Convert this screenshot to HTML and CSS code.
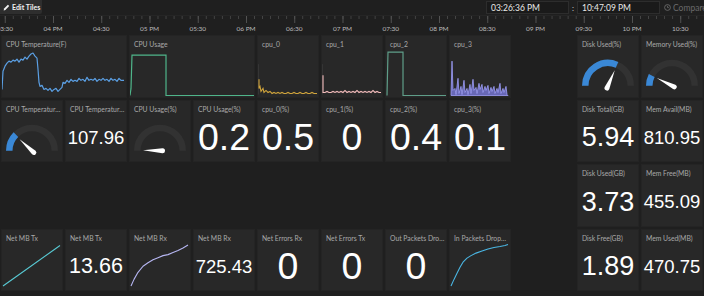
FILE: index.html
```html
<!DOCTYPE html>
<html>
<head>
<meta charset="utf-8">
<link rel="stylesheet" href="styles.css">
</head>
<body>
<div class="app">
  <header class="topbar">
    <button class="edit-btn">
      <svg class="pencil" width="7" height="7" viewBox="0 0 7 7"><path d="M0.6 6.4 L1.1 4.6 L4.9 0.8 L6.2 2.1 L2.4 5.9 Z" fill="#f2f2f2"/></svg>
      <span>Edit Tiles</span>
    </button>
    <div class="spacer"></div>
    <div class="time-input">03:26:36 PM</div>
    <span class="colon">:</span>
    <div class="time-input">10:47:09 PM</div>
    <div class="compare">
      <svg width="7" height="7" viewBox="0 0 7 7"><circle cx="3.5" cy="3.5" r="2.9" fill="none" stroke="#6a6a6a" stroke-width="0.9"/><path d="M3.5 1.8 V3.6 H4.9" fill="none" stroke="#6a6a6a" stroke-width="0.8"/></svg>
      <span>Compare</span>
    </div>
  </header>

  <div class="timeline">
    <svg width="704" height="20" viewBox="0 0 704 20">
      <defs>
        <pattern id="minor" x="4.75" y="0" width="8.0417" height="20" patternUnits="userSpaceOnUse">
          <rect x="0" y="1" width="0.8" height="3" fill="#4a4a4a"/>
        </pattern>
        <pattern id="major" x="4.75" y="0" width="48.25" height="20" patternUnits="userSpaceOnUse">
          <rect x="0" y="1" width="0.9" height="7" fill="#555"/>
        </pattern>
      </defs>
      <rect x="0" y="0.5" width="704" height="0.6" fill="#2c2c2c"/>
      <rect x="0" y="0" width="704" height="20" fill="url(#minor)"/>
      <rect x="0" y="0" width="704" height="20" fill="url(#major)"/>
      <g class="tl-labels" text-anchor="middle">
        <text x="4.75" y="15.5">03:30</text>
        <text x="53" y="15.5">04 PM</text>
        <text x="101.25" y="15.5">04:30</text>
        <text x="149.5" y="15.5">05 PM</text>
        <text x="197.75" y="15.5">05:30</text>
        <text x="246" y="15.5">06 PM</text>
        <text x="294.25" y="15.5">06:30</text>
        <text x="342.5" y="15.5">07 PM</text>
        <text x="390.75" y="15.5">07:30</text>
        <text x="439" y="15.5">08 PM</text>
        <text x="487.25" y="15.5">08:30</text>
        <text x="535.5" y="15.5">09 PM</text>
        <text x="583.75" y="15.5">09:30</text>
        <text x="632" y="15.5">10 PM</text>
        <text x="680.25" y="15.5">10:30</text>
      </g>
    </svg>
  </div>

  <main class="grid">
    <!-- Row 1 -->
    <section class="tile r1 span2">
      <div class="label">CPU Temperature(F)</div>
      <div class="body">
        <svg class="chart" viewBox="0 0 124 46" preserveAspectRatio="none">
          <polyline fill="none" stroke="#5b9fe3" stroke-width="1.2" stroke-linejoin="round" points="0,39 1,21 3,16 5,13 7,11 9,12 11,10 13,11 15,9 17,12 19,9 21,10 23,7 25,9 27,6 29,4 31,3 33,6 35,8 36,19 37,32 38,36 40,35 42,39 44,38 46,40 48,38 50,41 52,39 54,38 56,41 58,39 60,37 61,32 63,33 65,30 67,32 69,29 71,31 73,30 75,31 77,28 79,30 81,29 83,31 85,27 87,30 89,29 91,30 93,28 95,31 97,29 99,30 101,28 103,30 105,29 107,31 109,28 111,30 113,29 115,31 117,28 119,30 122,30"/>
        </svg>
      </div>
    </section>
    <section class="tile r1 span2">
      <div class="label">CPU Usage</div>
      <div class="body">
        <svg class="chart" viewBox="0 0 124 46" preserveAspectRatio="none">
          <polyline fill="none" stroke="#4fb58a" stroke-width="1.2" points="0,45 1,38 2,5 36,5 36,45 124,45"/>
        </svg>
      </div>
    </section>
    <section class="tile r1">
      <div class="label">cpu_0</div>
      <div class="body">
        <svg class="chart" viewBox="0 0 60 46" preserveAspectRatio="none">
          <line x1="0.5" y1="14" x2="0.5" y2="44" stroke="#3a3a3a" stroke-width="0.7"/>
          <polyline fill="none" stroke="#d1a53c" stroke-width="1.1" points="1,29 1,38 2,36 3,41 5,38 6,42 8,40 10,42 12,41 14,43 16,42 18,43 20,42 22,43 24,42 26,43 28,43 30,42 32,43 34,43 36,42 38,43 40,43 42,42 44,43 46,43 48,42 50,43 52,43 54,42 56,43 59,43"/>
        </svg>
      </div>
    </section>
    <section class="tile r1">
      <div class="label">cpu_1</div>
      <div class="body">
        <svg class="chart" viewBox="0 0 60 46" preserveAspectRatio="none">
          <line x1="0.5" y1="14" x2="0.5" y2="44" stroke="#3a3a3a" stroke-width="0.7"/>
          <polyline fill="none" stroke="#f3bcbc" stroke-width="1.1" points="1,25 1,42 3,42 5,41 7,42 9,42 11,41 13,42 15,41 17,42 19,41 21,42 23,40 25,42 27,41 29,42 31,41 33,42 35,40 37,42 39,41 41,42 43,41 45,42 47,41 49,42 51,40 53,42 55,41 57,42 59,42"/>
        </svg>
      </div>
    </section>
    <section class="tile r1">
      <div class="label">cpu_2</div>
      <div class="body">
        <svg class="chart" viewBox="0 0 60 46" preserveAspectRatio="none">
          <polyline fill="none" stroke="#5f9e89" stroke-width="1.2" points="1,45 2,2 17,2 17,45 60,45"/>
        </svg>
      </div>
    </section>
    <section class="tile r1">
      <div class="label">cpu_3</div>
      <div class="body">
        <svg class="chart" viewBox="0 0 60 46" preserveAspectRatio="none">
          <polygon fill="#7e7ee6" fill-opacity="0.75" stroke="#9d9df7" stroke-width="0.8" stroke-linejoin="round" points="1,45 2,11 3,40 5,38 6,44 8,28 9,43 11,36 12,44 14,30 15,42 17,38 18,44 20,34 21,43 23,29 24,40 26,37 27,43 29,33 30,39 32,34 33,42 35,36 36,40 38,35 39,43 41,37 42,41 44,36 45,43 47,38 48,42 50,33 51,43 53,38 54,42 56,36 57,44 58,45"/>
        </svg>
      </div>
    </section>
    <section class="tile r1 c10">
      <div class="label">Disk Used(%)</div>
      <div class="body">
        <svg class="chart" viewBox="0 0 60 46">
          <path d="M 7.25 35.5 A 22.75 22.75 0 0 1 52.75 35.5" fill="none" stroke="#323232" stroke-width="6.5"/>
          <path d="M 7.25 35.5 A 22.75 22.75 0 0 1 39.03 14.62" fill="none" stroke="#3a88d6" stroke-width="6.5"/>
          <path class="needle" d="M 13 35.5 L 32.5 33 A 2.5 2.5 0 0 1 32.5 38 Z" transform="rotate(113.4 30 35.5)"/>
        </svg>
      </div>
    </section>
    <section class="tile r1 c11">
      <div class="label">Memory Used(%)</div>
      <div class="body">
        <svg class="chart" viewBox="0 0 60 46">
          <path d="M 7.25 35.5 A 22.75 22.75 0 0 1 52.75 35.5" fill="none" stroke="#323232" stroke-width="6.5"/>
          <path d="M 7.25 35.5 A 22.75 22.75 0 0 1 9.73 25.17" fill="none" stroke="#3a88d6" stroke-width="6.5"/>
          <path class="needle" d="M 13 35.5 L 32.5 33 A 2.5 2.5 0 0 1 32.5 38 Z" transform="rotate(27 30 35.5)"/>
        </svg>
      </div>
    </section>

    <!-- Row 2 -->
    <section class="tile r2">
      <div class="label">CPU Temperature(F)</div>
      <div class="body">
        <svg class="chart" viewBox="0 0 60 46">
          <path d="M 7.25 35.5 A 22.75 22.75 0 0 1 52.75 35.5" fill="none" stroke="#323232" stroke-width="6.5"/>
          <path d="M 7.25 35.5 A 22.75 22.75 0 0 1 13.91 19.41" fill="none" stroke="#3a88d6" stroke-width="6.5"/>
          <path class="needle" d="M 13 35.5 L 32.5 33 A 2.5 2.5 0 0 1 32.5 38 Z" transform="rotate(43 30 35.5)"/>
        </svg>
      </div>
    </section>
    <section class="tile r2">
      <div class="label">CPU Temperature(F)</div>
      <div class="body"><span class="value v-s">107.96</span></div>
    </section>
    <section class="tile r2">
      <div class="label">CPU Usage(%)</div>
      <div class="body">
        <svg class="chart" viewBox="0 0 60 46">
          <path d="M 7.25 35.5 A 22.75 22.75 0 0 1 52.75 35.5" fill="none" stroke="#323232" stroke-width="6.5"/>
          <path class="needle" d="M 13 35.5 L 32.5 33 A 2.5 2.5 0 0 1 32.5 38 Z" transform="rotate(2 30 35.5)"/>
        </svg>
      </div>
    </section>
    <section class="tile r2">
      <div class="label">CPU Usage(%)</div>
      <div class="body"><span class="value v-xl">0.2</span></div>
    </section>
    <section class="tile r2">
      <div class="label">cpu_0(%)</div>
      <div class="body"><span class="value v-xl">0.5</span></div>
    </section>
    <section class="tile r2">
      <div class="label">cpu_1(%)</div>
      <div class="body"><span class="value v-xl">0</span></div>
    </section>
    <section class="tile r2">
      <div class="label">cpu_2(%)</div>
      <div class="body"><span class="value v-xl">0.4</span></div>
    </section>
    <section class="tile r2">
      <div class="label">cpu_3(%)</div>
      <div class="body"><span class="value v-xl">0.1</span></div>
    </section>
    <section class="tile r2 c10">
      <div class="label">Disk Total(GB)</div>
      <div class="body"><span class="value v-l">5.94</span></div>
    </section>
    <section class="tile r2 c11">
      <div class="label">Mem Avail(MB)</div>
      <div class="body"><span class="value v-s">810.95</span></div>
    </section>

    <!-- Row 3 -->
    <section class="tile r3 c10">
      <div class="label">Disk Used(GB)</div>
      <div class="body"><span class="value v-l">3.73</span></div>
    </section>
    <section class="tile r3 c11">
      <div class="label">Mem Free(MB)</div>
      <div class="body"><span class="value v-s">455.09</span></div>
    </section>

    <!-- Row 4 -->
    <section class="tile r4">
      <div class="label">Net MB Tx</div>
      <div class="body">
        <svg class="chart" viewBox="0 0 60 46" preserveAspectRatio="none">
          <polyline fill="none" stroke="#58cad4" stroke-width="1.1" points="1,41.5 58,1.5"/>
        </svg>
      </div>
    </section>
    <section class="tile r4">
      <div class="label">Net MB Tx</div>
      <div class="body"><span class="value v-m">13.66</span></div>
    </section>
    <section class="tile r4">
      <div class="label">Net MB Rx</div>
      <div class="body">
        <svg class="chart" viewBox="0 0 60 46" preserveAspectRatio="none">
          <polyline fill="none" stroke="#b6b6f2" stroke-width="1.1" stroke-linejoin="round" points="1,41.5 4,35 8,28 13,22 18,18.5 23,15.5 28,13.5 33,11.5 38,10.5 43,8.5 48,6.5 53,4 58,1"/>
        </svg>
      </div>
    </section>
    <section class="tile r4">
      <div class="label">Net MB Rx</div>
      <div class="body"><span class="value v-s">725.43</span></div>
    </section>
    <section class="tile r4">
      <div class="label">Net Errors Rx</div>
      <div class="body"><span class="value v-xl">0</span></div>
    </section>
    <section class="tile r4">
      <div class="label">Net Errors Tx</div>
      <div class="body"><span class="value v-xl">0</span></div>
    </section>
    <section class="tile r4">
      <div class="label">Out Packets Dropped</div>
      <div class="body"><span class="value v-xl">0</span></div>
    </section>
    <section class="tile r4">
      <div class="label">In Packets Dropped</div>
      <div class="body">
        <svg class="chart" viewBox="0 0 60 46" preserveAspectRatio="none">
          <polyline fill="none" stroke="#4ab6e3" stroke-width="1.1" stroke-linejoin="round" points="1,41.5 4,35 7,29 10,23 13,18 17,14 21,11.5 26,9 32,7 38,5 44,3.5 50,2.5 55,1.5 58,0.5"/>
        </svg>
      </div>
    </section>
    <section class="tile r4 c10">
      <div class="label">Disk Free(GB)</div>
      <div class="body"><span class="value v-l">1.89</span></div>
    </section>
    <section class="tile r4 c11">
      <div class="label">Mem Used(MB)</div>
      <div class="body"><span class="value v-s">470.75</span></div>
    </section>
  </main>
</div>
</body>
</html>
```

FILE: styles.css
```css
* { box-sizing: border-box; }

html, body {
  margin: 0;
  padding: 0;
}

body {
  width: 704px;
  height: 296px;
  overflow: hidden;
  background: #1f1f1f;
  font-family: Lato, "Open Sans", sans-serif;
}

.topbar {
  height: 15px;
  display: flex;
  align-items: center;
  background: #1f1f1f;
}

.edit-btn {
  align-self: flex-start;
  height: 14px;
  width: 42px;
  margin: 0;
  padding: 0 0 0 3px;
  border: 0;
  border-radius: 0 0 2px 0;
  background: #2e2e2e;
  color: #f2f2f2;
  font-family: Lato, sans-serif;
  font-size: 7px;
  font-weight: 700;
  display: flex;
  align-items: center;
  gap: 2px;
  white-space: nowrap;
}

.pencil { flex: none; }

.spacer { flex: 1; }

.time-input {
  width: 83px;
  height: 13px;
  background: #1a1a1a;
  border: 1px solid #2d2d2d;
  color: #e8e8e8;
  font-size: 8.5px;
  padding-left: 4px;
  display: flex;
  align-items: center;
}

.colon {
  width: 8px;
  text-align: center;
  color: #cfcfcf;
  font-size: 8px;
}

.compare {
  width: 40px;
  margin-left: 4px;
  display: flex;
  align-items: center;
  gap: 2px;
  color: #6a6a6a;
  font-size: 8.5px;
  white-space: nowrap;
  overflow: hidden;
}

.compare svg { flex: none; }

.timeline { height: 20px; }
.timeline svg { display: block; }

.tl-labels {
  font-family: Lato, sans-serif;
  font-size: 6.5px;
  fill: #b9b9b9;
}

.grid {
  display: grid;
  grid-template-columns: repeat(11, 62px);
  grid-template-rows: repeat(4, 62.5px);
  column-gap: 2px;
  row-gap: 2px;
  padding-left: 1px;
}

.r1 { grid-row: 1; }
.r2 { grid-row: 2; }
.r3 { grid-row: 3; }
.r4 { grid-row: 4; }
.c10 { grid-column: 10; }
.c11 { grid-column: 11; }
.span2 { grid-column-end: span 2; }

.tile {
  background: #282828;
  border: 1px solid #242424;
  display: flex;
  flex-direction: column;
  overflow: hidden;
  min-width: 0;
}

.label {
  height: 14px;
  flex: none;
  padding: 4px 1px 0 4px;
  font-size: 6.8px;
  line-height: 9px;
  color: #a9a9a9;
  white-space: nowrap;
  overflow: hidden;
  text-overflow: ellipsis;
}

.body {
  flex: 1;
  min-height: 0;
  display: flex;
  align-items: center;
  justify-content: center;
}

.chart {
  display: block;
  width: 100%;
  height: 100%;
}

.needle { fill: #ffffff; }

.value {
  font-family: "Liberation Sans", Arial, sans-serif;
  color: #ffffff;
  line-height: 1;
  white-space: nowrap;
}

.v-xl { font-size: 37.5px; }
.v-l  { font-size: 27px; }
.v-m  { font-size: 21.5px; }
.v-s  { font-size: 18.5px; }
```
